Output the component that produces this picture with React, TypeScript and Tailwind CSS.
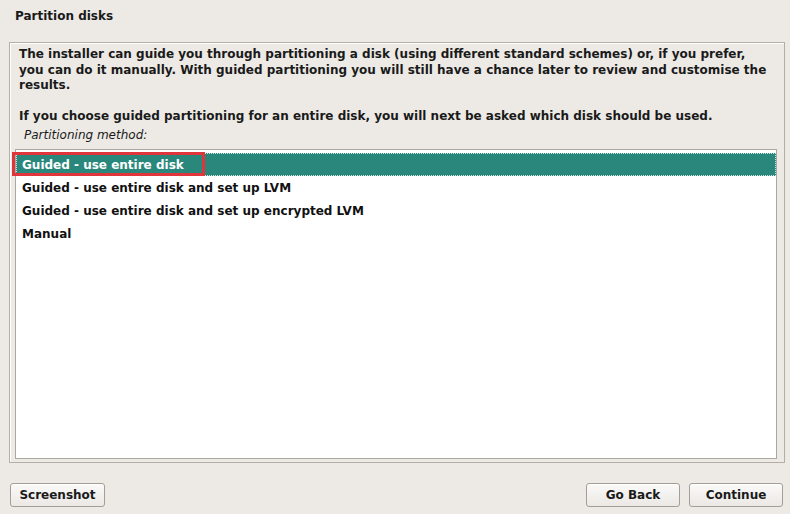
const font = "font-['DejaVu_Sans',sans-serif]";

const methods = [
  "Guided - use entire disk",
  "Guided - use entire disk and set up LVM",
  "Guided - use entire disk and set up encrypted LVM",
  "Manual",
];

function Button({ label, w }: { label: string; w: string }) {
  return (
    <button
      className={`${w} h-[24px] rounded-[3px] border border-[#a39f97] bg-gradient-to-b from-[#fbfaf9] to-[#ebe8e4] text-[12px] font-bold text-[#1a1a1a] shadow-[inset_0_1px_0_#ffffff]`}
    >
      {label}
    </button>
  );
}

export default function App() {
  const selected = 0;

  return (
    <div className={`${font} w-[790px] h-[514px] bg-[#edeae6] text-[#1a1a1a] flex flex-col overflow-hidden`}>
      <div className="h-[42px] pl-[15px] pt-[7px] text-[12px] font-bold">Partition disks</div>

      <div className="mx-[9px] mr-[5px] h-[421px] border border-[#b3afa7] shadow-[inset_1px_1px_0_#ffffff] flex flex-col px-[5px] pr-[7px] pb-[3px]">
        <div className="pt-[4px] pl-[4px] pr-[8px] text-[12px] font-bold leading-[15.5px]">
          <p>
            The installer can guide you through partitioning a disk (using different standard schemes) or, if you prefer,
            you can do it manually. With guided partitioning you will still have a chance later to review and customise the
            results.
          </p>
          <p className="mt-[15px]">
            If you choose guided partitioning for an entire disk, you will next be asked which disk should be used.
          </p>
        </div>
        <div className="pl-[9px] pt-[4px] text-[12px] italic leading-[15px]">Partitioning method:</div>

        <div className="relative mt-[6px] flex-1 border border-[#aca89f] bg-white pt-[3px]">
          {methods.map((m, i) => (
            <div
              key={m}
              className={`h-[23px] pl-[6px] flex items-center text-[12px] font-bold ${
                i === selected
                  ? "bg-[#2a877b] text-white outline-1 outline-dotted outline-[#cfe6e2] -outline-offset-1"
                  : "text-[#111]"
              }`}
            >
              {m}
            </div>
          ))}
          {/* annotation box around the selected row */}
          <div className="absolute left-[-4px] top-[2px] w-[193px] h-[24px] border-[3px] border-[#e0353a]" />
        </div>
      </div>

      <div className="flex items-center justify-between pl-[10px] pr-[7px] pt-[20px]">
        <Button label="Screenshot" w="w-[95px]" />
        <div className="flex gap-[9px]">
          <Button label="Go Back" w="w-[94px]" />
          <Button label="Continue" w="w-[94px]" />
        </div>
      </div>
    </div>
  );
}
